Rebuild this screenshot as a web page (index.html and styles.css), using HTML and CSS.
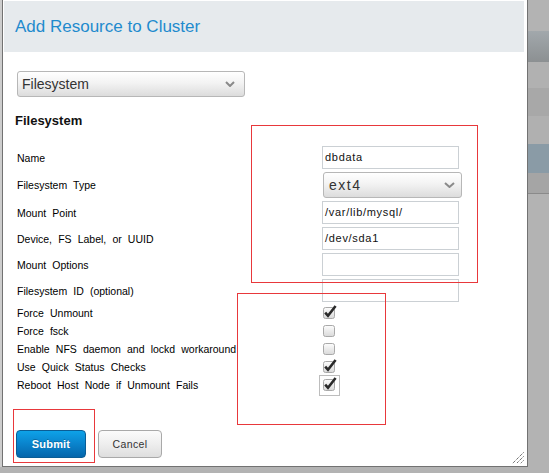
FILE: index.html
```html
<!DOCTYPE html>
<html>
<head>
<meta charset="utf-8">
<link rel="stylesheet" href="styles.css">
</head>
<body>
<div class="page">
  <div class="edge"></div>
  <div class="dialog">
    <div class="header"><h1 class="title">Add Resource to Cluster</h1></div>
    <div class="content">
      <div class="select select-type">
        <span class="select-text">Filesystem</span>
        <svg class="chev" width="10" height="6" viewBox="0 0 10 6"><path d="M1 1 L5 5 L9 1" fill="none" stroke="#8a8a8a" stroke-width="2"/></svg>
      </div>
      <h2 class="section">Filesystem</h2>
      <div class="fields">
        <label class="lbl">Name</label>
        <div class="input">dbdata</div>
        <label class="lbl">Filesystem Type</label>
        <div class="select select-fs">
          <span class="select-text fs-text">ext4</span>
          <svg class="chev" width="11" height="6" viewBox="0 0 11 6"><path d="M1 1 L5.5 5 L10 1" fill="none" stroke="#8a8a8a" stroke-width="2"/></svg>
        </div>
        <label class="lbl">Mount Point</label>
        <div class="input">/var/lib/mysql/</div>
        <label class="lbl">Device, FS Label, or UUID</label>
        <div class="input">/dev/sda1</div>
        <label class="lbl">Mount Options</label>
        <div class="input"></div>
        <label class="lbl">Filesystem ID (optional)</label>
        <div class="input"></div>
      </div>
      <div class="checks">
        <label class="lbl">Force Unmount</label>
        <span class="cb"><svg width="13" height="13" viewBox="0 0 13 13" overflow="visible"><defs><linearGradient id="g1" x1="0" y1="0" x2="0" y2="1"><stop offset="0" stop-color="#fdfdfd"/><stop offset="1" stop-color="#d9d9d9"/></linearGradient></defs><rect x="0.5" y="0.5" width="11" height="11" rx="2" fill="url(#g1)" stroke="#a9a9a9"/><path d="M2.2 5.6 L5 8.8 L12.6 -1" fill="none" stroke="#2a2a2a" stroke-width="2.6"/></svg></span>
        <label class="lbl">Force fsck</label>
        <span class="cb"><svg width="13" height="13" viewBox="0 0 13 13"><rect x="0.5" y="0.5" width="11" height="11" rx="2" fill="url(#g1)" stroke="#a9a9a9"/></svg></span>
        <label class="lbl">Enable NFS daemon and lockd workaround</label>
        <span class="cb"><svg width="13" height="13" viewBox="0 0 13 13"><rect x="0.5" y="0.5" width="11" height="11" rx="2" fill="url(#g1)" stroke="#a9a9a9"/></svg></span>
        <label class="lbl">Use Quick Status Checks</label>
        <span class="cb"><svg width="13" height="13" viewBox="0 0 13 13" overflow="visible"><rect x="0.5" y="0.5" width="11" height="11" rx="2" fill="url(#g1)" stroke="#a9a9a9"/><path d="M2.2 5.6 L5 8.8 L12.6 -1" fill="none" stroke="#2a2a2a" stroke-width="2.6"/></svg></span>
        <label class="lbl">Reboot Host Node if Unmount Fails</label>
        <span class="cb cb-focus"><svg width="13" height="13" viewBox="0 0 13 13" overflow="visible"><rect x="0.5" y="0.5" width="11" height="11" rx="2" fill="url(#g1)" stroke="#a9a9a9"/><path d="M2.2 5.6 L5 8.8 L12.6 -1" fill="none" stroke="#2a2a2a" stroke-width="2.6"/></svg></span>
      </div>
      <div class="buttons">
        <button class="btn btn-primary">Submit</button>
        <button class="btn btn-default">Cancel</button>
      </div>
    </div>
    <svg class="grip" width="12" height="12" viewBox="0 0 12 12"><g stroke="#333" stroke-width="1" stroke-dasharray="1 1"><path d="M11.5 0.5 L0.5 11.5"/><path d="M11.5 4.5 L4.5 11.5"/><path d="M11.5 8.5 L8.5 11.5"/></g></svg>
  </div>
  <div class="strip">
    <div class="band b1"></div>
    <div class="band b2"></div>
    <div class="band b3"></div>
    <div class="band b4"></div>
    <div class="band b5"></div>
    <div class="band b6"></div>
    <div class="band b7"></div>
    <div class="band b8"></div>
    <div class="band b9"></div>
  </div>
</div>
<div class="mark mark-fields"></div>
<div class="mark mark-checks"></div>
<div class="mark mark-submit"></div>
</body>
</html>
```
FILE: styles.css
```css
html, body {
  margin: 0;
  padding: 0;
}
body {
  width: 549px;
  height: 473px;
  overflow: hidden;
  background: #b3b3b3;
  position: relative;
  font-family: "Liberation Sans", Arial, sans-serif;
  color: #1a1a1a;
}
.page {
  display: flex;
  align-items: flex-start;
}
.edge {
  width: 2px;
  height: 467px;
  background: #cdcdcd;
  flex: none;
}
.dialog {
  position: relative;
  box-sizing: border-box;
  width: 526px;
  height: 467px;
  flex: none;
  background: #fff;
  border: 1px solid #727272;
  border-top: none;
  padding: 1px 3px 0 1px;
}
.header {
  height: 51px;
  background: #e6eaed;
  display: flex;
  align-items: center;
  padding: 1px 0 0 11px;
  box-sizing: border-box;
}
.title {
  margin: 0;
  font-size: 17px;
  font-weight: normal;
  color: #1f8bcd;
  line-height: 20px;
}
.content {
  padding: 19px 0 0 13px;
}
.select {
  box-sizing: border-box;
  height: 26px;
  border: 1px solid #b7b7b7;
  border-radius: 3px;
  background: linear-gradient(#ffffff, #f3f3f3 45%, #dcdcdc);
  display: flex;
  align-items: center;
  justify-content: space-between;
  padding: 0 9px 0 4px;
  color: #333;
}
.select-type {
  width: 228px;
}
.select-text {
  font-size: 14px;
  line-height: 16px;
}
.fs-text {
  font-size: 14px;
  letter-spacing: 1.5px;
  padding-left: 1px;
}
.chev {
  display: block;
}
.section {
  margin: 16px 0 0 -2px;
  font-size: 13px;
  line-height: 16px;
  font-weight: bold;
  color: #111;
}
.fields {
  margin-top: 17px;
  display: grid;
  grid-template-columns: 305px 137px;
  row-gap: 3px;
  align-items: center;
}
.lbl {
  font-size: 10.5px;
  word-spacing: 3.2px;
  line-height: 12px;
  color: #000;
  white-space: nowrap;
}
.input {
  box-sizing: border-box;
  height: 23px;
  border: 1px solid #cbd0d4;
  font-size: 11px;
  letter-spacing: 0.7px;
  line-height: 21px;
  padding-left: 2px;
  color: #111;
}
.select-fs {
  width: 139px;
  margin-left: 1px;
  padding-right: 6px;
}
.checks {
  margin-top: 2px;
  display: grid;
  grid-template-columns: 306px auto;
  grid-auto-rows: 18px;
  align-items: center;
}
.cb {
  display: block;
  width: 13px;
  height: 13px;
  justify-self: start;
}
.cb svg {
  display: block;
}
.cb-focus {
  outline: 1px solid #bdbdbd;
  outline-offset: 3px;
}
.buttons {
  margin: 36px 0 0 -1px;
  display: flex;
  gap: 12px;
}
.btn {
  box-sizing: border-box;
  height: 28px;
  border-radius: 4px;
  font-family: "Liberation Sans", Arial, sans-serif;
  padding: 0;
}
.btn-primary {
  width: 70px;
  border: 1px solid #0b5d95;
  background: linear-gradient(#0ea2e8, #0a86cf 45%, #0566ab);
  color: #fff;
  font-weight: bold;
  font-size: 11px;
  letter-spacing: 0.2px;
  text-shadow: 0 -1px 0 rgba(0, 0, 0, 0.25);
}
.btn-default {
  width: 64px;
  border: 1px solid #a9a9a9;
  background: linear-gradient(#fbfbfb, #eeeeee 50%, #dedede);
  color: #333;
  font-size: 10.5px;
  letter-spacing: 0.4px;
}
.grip {
  position: absolute;
  right: 3px;
  bottom: 2px;
}
.strip {
  width: 21px;
  height: 473px;
  display: flex;
  flex-direction: column;
  flex: none;
}
.band { flex: none; }
.b1 { height: 31px; background: #b3b3b3; }
.b2 { height: 31px; background: linear-gradient(#a2a8ac, #8c9092); }
.b3 { height: 26px; background: #b1b1b1; }
.b4 { height: 28px; background: #a8a8a8; }
.b5 { height: 28px; background: #b0b0b0; }
.b6 { height: 29px; background: #8a9ba6; }
.b7 { height: 20px; background: #a5a5a5; }
.b8 { height: 1px; background: #8a8a8a; }
.b9 { flex: 1; background: #b3b3b3; }
.mark {
  position: absolute;
  box-sizing: border-box;
  border: 1px solid #e8383b;
}
.mark-fields { left: 251px; top: 125px; width: 227px; height: 158px; }
.mark-checks { left: 237px; top: 293px; width: 149px; height: 132px; }
.mark-submit { left: 13px; top: 409px; width: 82px; height: 54px; }
```
